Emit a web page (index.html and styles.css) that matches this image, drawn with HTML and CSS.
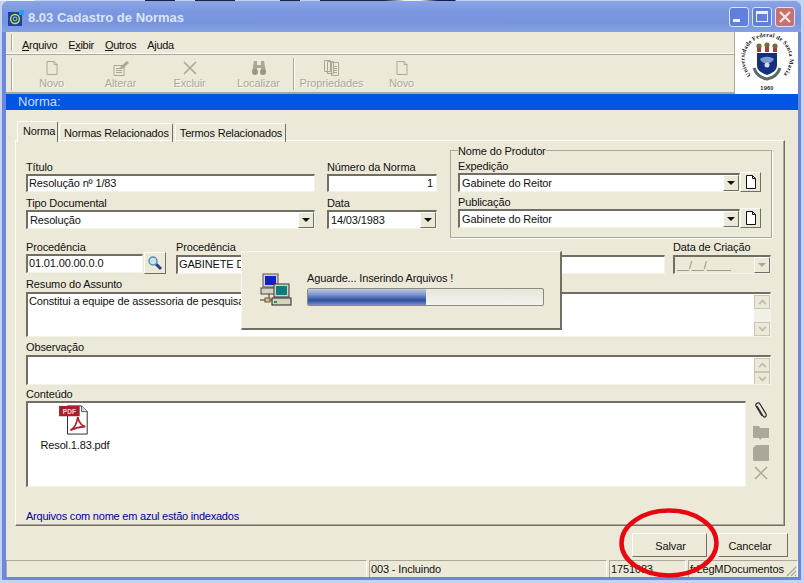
FILE: index.html
```html
<!DOCTYPE html>
<html lang="pt">
<head>
<meta charset="utf-8">
<title>8.03 Cadastro de Normas</title>
<link rel="stylesheet" href="styles.css">
</head>
<body>
<div class="window">
  <header class="titlebar">
    <svg class="app-icon" width="16" height="16" viewBox="0 0 16 16"><rect y="2" width="14" height="14" fill="#17459c"/><rect x="11" width="5" height="5" fill="#2f9bef"/><circle cx="7" cy="9" r="4.4" fill="none" stroke="#d5d94a" stroke-width="1.5"/><circle cx="7" cy="9" r="1.8" fill="none" stroke="#7ec46a" stroke-width="1.2"/></svg>
    <span class="title-text">8.03 Cadastro de Normas</span>
    <div class="caption-btns">
      <span class="cap cap-min"><i class="min-glyph"></i></span>
      <span class="cap cap-max"><i class="max-glyph"></i></span>
      <span class="cap cap-close"><svg width="14" height="14" viewBox="0 0 14 14"><path d="M2 2l10 10M12 2L2 12" stroke="#f4e4e0" stroke-width="2.4" fill="none"/></svg></span>
    </div>
  </header>
  <div class="client">
    <div class="top-band">
      <div class="bars">
        <nav class="menubar">
          <span class="menu-item"><u>A</u>rquivo</span>
          <span class="menu-item">E<u>x</u>ibir</span>
          <span class="menu-item"><u>O</u>utros</span>
          <span class="menu-item">A<u>j</u>uda</span>
        </nav>
        <div class="toolbar">
          <div class="tool">
            <svg width="16" height="16" viewBox="0 0 16 16"><path d="M3 1.500h7l3 3v10H3z" fill="none" stroke="#aca899"/><path d="M10 1.500v3h3" fill="none" stroke="#aca899"/></svg>
            <span>Novo</span>
          </div>
          <div class="tool">
            <svg width="18" height="16" viewBox="0 0 18 16"><path d="M2 5.500h10v10H2z" fill="none" stroke="#aca899"/><path d="M4 8.500h6M4 10.500h6M4 12.500h6" stroke="#aca899"/><path d="M8 7l7-6 2 2-7 6z" fill="#aca899"/></svg>
            <span>Alterar</span>
          </div>
          <div class="tool">
            <svg width="16" height="16" viewBox="0 0 16 16"><path d="M2 2l12 12M14 2L2 14" stroke="#aca899" stroke-width="1.600" fill="none"/></svg>
            <span>Excluir</span>
          </div>
          <div class="tool">
            <svg width="16" height="16" viewBox="0 0 16 16"><path d="M3 1h3v4h4V1h3l2 11h-5V8H6v4H1z" fill="#aca899"/><circle cx="4" cy="12" r="3" fill="#9a9686"/><circle cx="12" cy="12" r="3" fill="#9a9686"/></svg>
            <span>Localizar</span>
          </div>
          <div class="tool-sep"></div>
          <div class="tool tool-wide">
            <svg width="18" height="16" viewBox="0 0 18 16"><path d="M1.500 .5h6v11h-6zM4.500 1.500h6v12h-6zM8.500 2.500h7v13h-7z" fill="#ece9d8" stroke="#aca899"/><path d="M10 6.500h4M10 8.500h4M10 10.500h4M10 12.500h4" stroke="#aca899"/></svg>
            <span>Propriedades</span>
          </div>
          <div class="tool">
            <svg width="16" height="16" viewBox="0 0 16 16"><path d="M3 1.500h7l3 3v10H3z" fill="none" stroke="#aca899"/><path d="M10 1.500v3h3" fill="none" stroke="#aca899"/></svg>
            <span>Novo</span>
          </div>
        </div>
      </div>
      <div class="logo">
        <svg width="62" height="62" viewBox="0 0 62 62">
          <defs><path id="sealArc" d="M15 43A22.500 22.500 0 1 1 47 43"/></defs>
          <text class="seal-text"><textPath href="#sealArc" textLength="104" lengthAdjust="spacing">Universidade Federal de Santa Maria</textPath></text>
          <text class="seal-year" x="31" y="58" text-anchor="middle">1960</text>
          <g fill="#7a6a3a"><circle cx="23" cy="14" r="2.600"/><circle cx="31" cy="13" r="2.600"/><circle cx="39" cy="14" r="2.600"/></g>
          <g fill="#a8402f"><rect x="21" y="16" width="4" height="4"/><rect x="29" y="15" width="4" height="5"/><rect x="37" y="16" width="4" height="4"/></g>
          <path d="M21 21h20v12c0 6-5 8-10 10-5-2-10-4-10-10z" fill="#12307f"/>
          <path d="M24 27c4-3 10-3 14 0-2 5-11 7-14 0z" fill="#7f9ac8"/>
          <path d="M18 36c2 6 7 10 13 11 6-1 11-5 13-11" fill="none" stroke="#5c6a6a" stroke-width="3"/>
          <circle cx="31" cy="33" r="2.500" fill="#d5dcec"/>
        </svg>
      </div>
    </div>
    <div class="blue-bar">Norma:</div>
    <div class="body-area">
      <div class="tabs">
        <span class="tab tab-on">Norma</span>
        <span class="tab">Normas Relacionados</span>
        <span class="tab">Termos Relacionados</span>
      </div>
      <section class="panel">
        <div class="row-a">
          <div class="grid-left">
            <div class="field">
              <label class="lbl">Título</label>
              <div class="inset h18">Resolução nº 1/83</div>
            </div>
            <div class="field">
              <label class="lbl">Número da Norma</label>
              <div class="inset h18 right">1</div>
            </div>
            <div class="field">
              <label class="lbl">Tipo Documental</label>
              <div class="inset combo h19"><span class="grow">Resolução</span><span class="drop"><i class="arrow"></i></span></div>
            </div>
            <div class="field">
              <label class="lbl">Data</label>
              <div class="inset combo h19"><span class="grow">14/03/1983</span><span class="drop"><i class="arrow"></i></span></div>
            </div>
          </div>
          <div class="group">
            <span class="legend">Nome do Produtor</span>
            <div class="field">
              <label class="lbl">Expedição</label>
              <div class="combo-row">
                <div class="inset combo h19 grow"><span class="grow">Gabinete do Reitor</span><span class="drop"><i class="arrow"></i></span></div>
                <span class="btn3d doc-btn"><svg width="12" height="14" viewBox="0 0 12 14"><path d="M1.500 .5h6l3 3v10h-9z" fill="#fff" stroke="#111"/><path d="M7.500 .5v3h3" fill="none" stroke="#111"/></svg></span>
              </div>
            </div>
            <div class="field gap-top">
              <label class="lbl">Publicação</label>
              <div class="combo-row">
                <div class="inset combo h19 grow"><span class="grow">Gabinete do Reitor</span><span class="drop"><i class="arrow"></i></span></div>
                <span class="btn3d doc-btn"><svg width="12" height="14" viewBox="0 0 12 14"><path d="M1.500 .5h6l3 3v10h-9z" fill="#fff" stroke="#111"/><path d="M7.500 .5v3h3" fill="none" stroke="#111"/></svg></span>
              </div>
            </div>
          </div>
        </div>
        <div class="row-b">
          <div class="field w140">
            <label class="lbl">Procedência</label>
            <div class="combo-row">
              <div class="inset h19 grow">01.01.00.00.0.0</div>
              <span class="btn3d search-btn"><svg width="16" height="16" viewBox="0 0 16 16"><path d="M9 9l5 5" stroke="#24408f" stroke-width="3"/><circle cx="6" cy="6" r="4" fill="#bfe4f4" stroke="#5f8fa8" stroke-width="1.500"/></svg></span>
            </div>
          </div>
          <div class="field w489">
            <label class="lbl">Procedência</label>
            <div class="inset h19">GABINETE DO REITOR</div>
          </div>
          <div class="field w98">
            <label class="lbl">Data de Criação</label>
            <div class="inset combo h19 disabled"><span class="grow">__/__/____</span><span class="drop"><i class="arrow arrow-off"></i></span></div>
          </div>
        </div>
        <div class="field gap5">
          <label class="lbl">Resumo do Assunto</label>
          <div class="inset memo h45"><span class="grow">Constitui a equipe de assessoria de pesquisa</span>
            <div class="scroll">
              <span class="sbtn"><i class="up"></i></span><span class="strack"></span><span class="sbtn"><i class="down"></i></span>
            </div>
          </div>
        </div>
        <div class="field gap5">
          <label class="lbl">Observação</label>
          <div class="inset memo h30"><span class="grow"></span>
            <div class="scroll">
              <span class="sbtn"><i class="up"></i></span><span class="sbtn"><i class="down"></i></span>
            </div>
          </div>
        </div>
        <div class="field gap3">
          <label class="lbl">Conteúdo</label>
          <div class="content-row">
            <div class="inset files">
              <div class="file">
                <svg width="34" height="30" viewBox="0 0 36 32">
                  <path d="M10 1h15l6 6v24H10z" fill="#fff" stroke="#222"/>
                  <path d="M25 1v6h6" fill="#ddd" stroke="#555"/>
                  <rect x="1" y="1" width="22" height="11" fill="#a3212c"/>
                  <text class="pdf-tag" x="12" y="9.500" text-anchor="middle">PDF</text>
                  <path d="M13 27c4-2 7-7 8-14 1 5 4 9 8 10-5 0-10 1-16 4z" fill="none" stroke="#b3202a" stroke-width="1.800"/>
                </svg>
                <span>Resol.1.83.pdf</span>
              </div>
            </div>
            <div class="side-icons">
              <svg width="18" height="19" viewBox="0 0 18 19"><path d="M5 5l6 10c1 2 4 1 3-2L8 3C7 1 3 2 4 5l6 10" fill="none" stroke="#333" stroke-width="1.300"/></svg>
              <svg width="18" height="18" viewBox="0 0 18 18"><path d="M1 3h6l1 2h9v10H10l-2 2-1-2H1z" fill="#aca899"/></svg>
              <svg width="18" height="18" viewBox="0 0 18 18"><path d="M4 1h13v15a1 1 0 0 1-1 1H2a1 1 0 0 1-1-1V4z" fill="#aca899"/></svg>
              <svg width="16" height="16" viewBox="0 0 16 16"><path d="M2 2l12 12M14 2L2 14" stroke="#aca899" stroke-width="1.500" fill="none"/></svg>
            </div>
          </div>
        </div>
        <p class="hint">Arquivos com nome em azul estão indexados</p>
      </section>
      <div class="actions">
        <span class="btn3d act-btn salvar">Salvar</span>
        <span class="btn3d act-btn cancelar">Cancelar</span>
      </div>
    </div>
    <footer class="status">
      <span class="pane p1"></span>
      <span class="pane p2">003 - Incluindo</span>
      <span class="pane p3">1751083</span>
      <span class="pane p4">frLegMDocumentos<svg class="grip" width="12" height="12" viewBox="0 0 12 12"><path d="M11 2L2 11M11 6l-5 5M11 10l-1 1" stroke="#aca899" stroke-width="1.200"/></svg></span>
    </footer>
  </div>
</div>

<div class="dialog">
  <svg class="net-icon" width="34" height="34" viewBox="0 0 34 34">
    <rect x="4" y="1" width="15" height="13" fill="#d6d2c2" stroke="#555"/><rect x="6" y="3" width="11" height="9" fill="#1220c8"/>
    <rect x="2" y="15" width="17" height="6" fill="#d6d2c2" stroke="#444"/>
    <rect x="15" y="11" width="15" height="13" fill="#d6d2c2" stroke="#333"/><rect x="17" y="13" width="11" height="9" fill="#0b7f7f"/>
    <rect x="13" y="25" width="19" height="7" fill="#d6d2c2" stroke="#222"/><rect x="15" y="28" width="3" height="2" fill="#1c9c3c"/>
    <path d="M10 21v6H1M10 27h3" stroke="#333" fill="none"/><rect x="6" y="25" width="5" height="4" fill="#e8c94a" stroke="#555"/>
  </svg>
  <div class="dlg-main">
    <span class="dlg-text">Aguarde... Inserindo Arquivos !</span>
    <div class="progress"><div class="progress-fill" style="width:50%"></div></div>
  </div>
</div>

<svg class="ring" width="104" height="74" viewBox="0 0 104 74"><ellipse cx="52" cy="37" rx="47.500" ry="32.500" fill="none" stroke="#e8060f" stroke-width="4.500"/></svg>
</body>
</html>
```

FILE: styles.css
```css
* { box-sizing: border-box; }
html, body { margin: 0; padding: 0; }
body {
  width: 804px; height: 583px; overflow: hidden; position: relative;
  background:
    linear-gradient(90deg, #eef1fa 0 35px, #c3d3f2 35px 145px, #1c2340 145px 175px, #c3d3f2 175px 195px, #1c2340 195px 235px, #c3d3f2 235px 280px, #1c2340 280px 300px, #c3d3f2 300px 320px, #1c2340 320px 385px, #eef1fa 405px 420px, #141d4a 438px 455px, #c3d3f2 456px) 0 0 / 100% 1px no-repeat,
    #c3d3f2;
  font: 11px/13px "Liberation Sans", Arial, sans-serif;
  letter-spacing: -.14px;
  color: #111;
}
.window {
  width: 799px; height: 579px; margin: 1px 0 0 2px;
  display: flex; flex-direction: column;
  background: #6d87de;
  border-radius: 7px 7px 0 0;
  padding: 0 3px 3px 4px;
}
.titlebar {
  height: 31px; flex: none; display: flex; align-items: center;
  margin: 0 -3px 0 -4px; padding: 0 3px 0 6px;
  border-radius: 7px 7px 0 0;
  background: linear-gradient(#8aa5e6 0, #7a97df 35%, #7894dc 70%, #86a1e4 100%);
}
.app-icon { margin: 2px 4px 0 0; }
.title-text { font: bold 13px/16px "Liberation Sans", Arial, sans-serif; color: #dce5f9; letter-spacing: 0; margin-top: 2px; }
.caption-btns { margin-left: auto; display: flex; gap: 3px; padding-right: 3px; }
.cap { width: 20px; height: 20px; border-radius: 3px; border: 1px solid #dbe4f8; display: flex; align-items: center; justify-content: center; background: #5f80dc; }
.cap-close { background: #c4716f; }
.min-glyph { width: 7px; height: 3px; background: #eef2fc; margin: 8px 5px 0 0; }
.max-glyph { width: 12px; height: 11px; border: 1px solid #eef2fc; border-top-width: 3px; }
.client { flex: 1; min-height: 0; display: flex; flex-direction: column; background: #ece9d8; }
.top-band { height: 62px; flex: none; display: flex; }
.bars { flex: 1; border-right: 1px solid #aca899; min-width: 0; }
.logo { width: 63px; flex: none; background: #fff; display: flex; align-items: center; justify-content: center; overflow: hidden; }
.seal-text { font: bold 6px "Liberation Serif", serif; fill: #111; letter-spacing: 0; }
.seal-year { font: bold 5.500px "Liberation Sans", sans-serif; fill: #222; letter-spacing: .3px; }
.menubar {
  height: 23px; display: flex; align-items: center; gap: 11px; padding: 4px 0 0 16px;
  border-bottom: 1px solid #aca899; box-shadow: inset 0 -1px 0 #fff;
  background: linear-gradient(90deg, transparent 5px, #aca899 5px, #aca899 6px, #fff 6px, #fff 7px, transparent 7px);
  background-size: 100% 17px; background-repeat: no-repeat; background-position: 0 2px;
}
.menu-item { letter-spacing: -.3px; }
.toolbar {
  height: 39px; display: flex; padding: 1px 0 0 11px; border-bottom: 2px solid #aca899;
  background: linear-gradient(90deg, transparent 5px, #aca899 5px, #aca899 6px, #fff 6px, #fff 7px, transparent 7px);
  background-size: 100% 33px; background-repeat: no-repeat; background-position: 0 3px;
}
.tool { width: 69px; display: flex; flex-direction: column; align-items: center; color: #aca899; padding-top: 4px; gap: 1px; text-shadow: 1px 1px 0 #f8f7ef; }
.tool svg { height: 16px; display: block; }
.tool-wide { width: 71px; }
.tool-sep { width: 2px; height: 32px; margin: 2px 1px 0 0; border-left: 1px solid #aca899; border-right: 1px solid #fff; }
.blue-bar { height: 16px; flex: none; background: #0055e5; color: #cfdcf8; font-size: 13px; line-height: 16px; padding-left: 12px; letter-spacing: 0; }
.body-area { flex: 1; min-height: 0; padding: 11px 12px 0 9px; display: flex; flex-direction: column; }
.tabs { display: flex; height: 20px; flex: none; padding-left: 2px; position: relative; z-index: 1; }
.tab { height: 19px; margin-top: 2px; padding: 3px 3px 0 4px; border-top: 1px solid #fff; border-left: 1px solid #fff; border-right: 1px solid #716f64; border-radius: 2px 2px 0 0; white-space: nowrap; margin-right: 2px; letter-spacing: -.18px; }
.tab-on { margin-top: 0; height: 21px; width: 41px; padding: 3px 2px 0 5px; background: #ece9d8; margin-right: 1px; }
.panel { height: 386px; flex: none; border: 1px solid #fff; border-right: 1px solid #716f64; border-bottom: 1px solid #716f64; box-shadow: inset -1px -1px 0 #aca899; padding: 0 0 0 10px; margin-top: -1px; width: 770px; }
.row-a { display: flex; height: 98px; padding-top: 9px; }
.grid-left { width: 411px; display: grid; grid-template-columns: 289px 110px; column-gap: 12px; row-gap: 5px; align-content: start; padding-top: 11px; }
.field { display: flex; flex-direction: column; min-width: 0; }
.lbl { height: 13px; line-height: 13px; white-space: nowrap; }
.row-b .lbl, .gap5 .lbl { line-height: 11px; }
.inset { background: #fff; border-top: 2px solid #716f64; border-left: 2px solid #716f64; border-right: 1px solid #f4f3ea; border-bottom: 1px solid #f4f3ea; padding: 1px 1px 0 1px; white-space: nowrap; overflow: hidden; }
.h18 { height: 18px; }
.h19 { height: 19px; }
.h30 { height: 30px; }
.h45 { height: 45px; }
.right { text-align: right; padding-right: 3px; }
.combo { display: flex; padding: 0 0 0 2px; align-items: stretch; line-height: 17px; }
.grow { flex: 1; min-width: 0; }
.drop { width: 16px; flex: none; background: #ece9d8; border-right: 1px solid #716f64; border-bottom: 1px solid #716f64; border-top: 1px solid #fff; border-left: 1px solid #fff; display: flex; align-items: center; justify-content: center; }
.arrow { width: 0; height: 0; border-left: 4px solid transparent; border-right: 4px solid transparent; border-top: 4px solid #111; }
.arrow-off { border-top-color: #aca899; }
.disabled { background: #ece9d8; color: #8f8b7c; }
.group { width: 322px; height: 88px; margin-left: 13px; position: relative; border: 1px solid #aca899; box-shadow: 1px 1px 0 #fff; padding: 9px 10px 0 7px; }
.legend { position: absolute; left: 7px; top: -5px; height: 11px; line-height: 11px; background: #ece9d8; }
.combo-row { display: flex; }
.gap-top { margin-top: 4px; }
.btn3d { background: #ece9d8; border-top: 1px solid #fff; border-left: 1px solid #fff; border-right: 1px solid #716f64; border-bottom: 1px solid #716f64; display: flex; align-items: center; justify-content: center; }
.doc-btn { width: 21px; height: 20px; flex: none; margin-top: -1px; }
.row-b { display: flex; height: 32px; margin-top: 3px; }
.w140 { width: 140px; }
.w489 { width: 489px; margin-left: 10px; }
.w98 { width: 98px; margin-left: 8px; }
.search-btn { width: 22px; height: 22px; flex: none; margin: -2px 0 0 1px; }
.gap5 { margin-top: 5px; }
.gap3 { margin-top: 3px; }
.memo { display: flex; width: 745px; padding-right: 0; }
.scroll { width: 16px; flex: none; display: flex; flex-direction: column; background: #f2f1e8; }
.sbtn { height: 14px; flex: none; background: #ece9d8; border: 1px solid #c9c6b6; display: flex; align-items: center; justify-content: center; }
.strack { flex: 1; }
.up, .down { width: 7px; height: 7px; border-left: 2px solid #bdbaa9; border-top: 2px solid #bdbaa9; transform: scale(.8) rotate(45deg); margin-top: 3px; }
.down { transform: scale(.8) rotate(225deg); margin-top: -3px; }
.content-row { display: flex; }
.files { width: 720px; height: 86px; padding: 2px 0 0 11px; }
.file { width: 72px; display: flex; flex-direction: column; align-items: center; gap: 4px; }
.file svg { display: block; }
.pdf-tag { font: bold 7px "Liberation Sans", sans-serif; fill: #f3dcdc; letter-spacing: 0; }
.side-icons { width: 24px; display: flex; flex-direction: column; align-items: center; gap: 3px; margin-left: 3px; }
.hint { margin: 23px 0 0; color: #00009c; letter-spacing: -.22px; }
.actions { display: flex; gap: 11px; justify-content: flex-end; padding: 7px 0 0; height: 34px; flex: none; margin-right: -2px; }
.act-btn { height: 24px; padding-top: 3px; }
.salvar { width: 75px; padding-left: 2px; }
.cancelar { width: 70px; padding-right: 6px; }
.status { height: 17px; flex: none; display: flex; gap: 2px; background: #ece9d8; }
.pane { border-top: 1px solid #aca899; border-left: 1px solid #aca899; border-right: 1px solid #fff; padding: 2px 0 0 1px; white-space: nowrap; position: relative; }
.p1 { width: 361px; }
.p2 { width: 238px; }
.p3 { width: 77px; }
.p4 { flex: 1; overflow: hidden; }
.grip { position: absolute; right: 0; bottom: 0; }
.dialog { position: absolute; left: 241px; top: 251px; width: 321px; height: 79px; background: #ece9d8; border-top: 1px solid #f8f7ef; border-left: 1px solid #f8f7ef; border-right: 2px solid #716f64; border-bottom: 2px solid #716f64; display: flex; padding: 20px 0 0 17px; }
.net-icon { flex: none; margin-top: 1px; }
.dlg-main { margin-left: 14px; display: flex; flex-direction: column; gap: 3px; width: 237px; }
.progress { height: 18px; border: 1px solid #8f8b7c; border-radius: 2px; background: linear-gradient(#e8e6da, #f4f3ec); overflow: hidden; }
.progress-fill { height: 100%; background: linear-gradient(#bcc8e6 0, #7d95cf 35%, #2c4fa0 70%, #7a90c8 100%); }
.ring { position: absolute; left: 617px; top: 506px; }
```
